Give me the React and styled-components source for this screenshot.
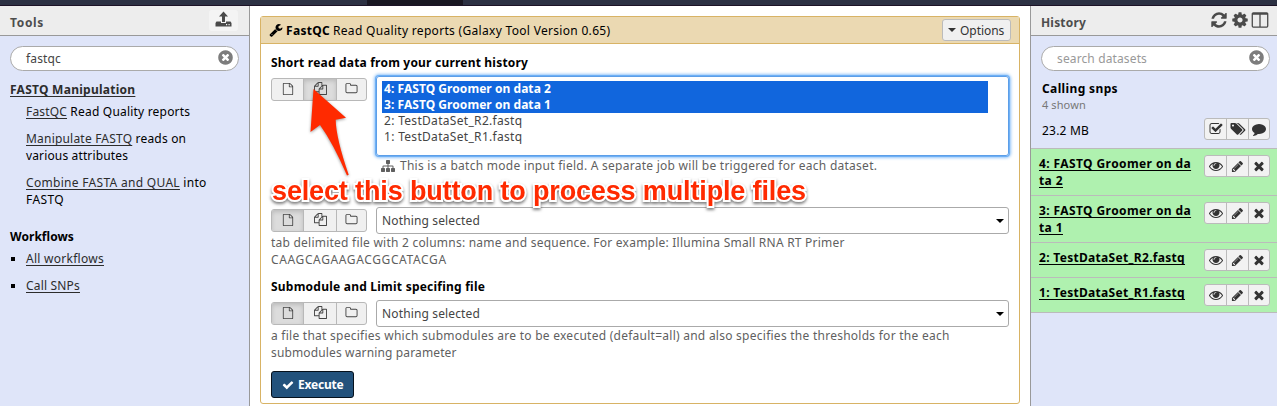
import React from 'react';
import styled, { createGlobalStyle, css } from 'styled-components';

const GlobalStyle = createGlobalStyle`
  * { box-sizing: border-box; }
  body { margin: 0; overflow: hidden; background: #fff; }
`;

const ICONS = {
  file: 'M1596 380q28 28 48 76t20 88v1152q0 40-28 68t-68 28h-1344q-40 0-68-28t-28-68v-1600q0-40 28-68t68-28h896q40 0 88 20t76 48zm-444-244v376h376q-10-29-22-41l-313-313q-12-12-41-22zm384 1528v-1024h-416q-40 0-68-28t-28-68v-416h-768v1536h1280z',
  files: 'M1696 384q40 0 68 28t28 68v1216q0 40-28 68t-68 28h-960q-40 0-68-28t-28-68v-288h-544q-40 0-68-28t-28-68v-672q0-40 20-88t48-76l408-408q28-28 76-48t88-20h416q40 0 68 28t28 68v328q68-40 128-40h416zm-544 213l-299 299h299v-299zm-640-384l-299 299h299v-299zm196 647l316-316v-416h-384v416q0 40-28 68t-68 28h-416v640h512v-256q0-40 20-88t48-76zm956 804v-1152h-384v416q0 40-28 68t-68 28h-416v640h896z',
  folder: 'M1600 1312v-704q0-40-28-68t-68-28h-704q-40 0-68-28t-28-68v-64q0-40-28-68t-68-28h-320q-40 0-68 28t-28 68v960q0 40 28 68t68 28h1216q40 0 68-28t28-68zm128-704v704q0 92-66 158t-158 66h-1216q-92 0-158-66t-66-158v-960q0-92 66-158t158-66h320q92 0 158 66t66 158v32h672q92 0 158 66t66 158z',
  times: 'M1490 1322q0 40-28 68l-136 136q-28 28-68 28t-68-28l-294-294-294 294q-28 28-68 28t-68-28l-136-136q-28-28-28-68t28-68l294-294-294-294q-28-28-28-68t28-68l136-136q28-28 68-28t68 28l294 294 294-294q28-28 68-28t68 28l136 136q28 28 28 68t-28 68l-294 294 294 294q28 28 28 68z',
  timesCircle: 'M1277 1122q0-26-19-45l-181-181 181-181q19-19 19-45 0-27-19-46l-90-90q-19-19-46-19-26 0-45 19l-181 181-181-181q-19-19-45-19-27 0-46 19l-90 90q-19 19-19 46 0 26 19 45l181 181-181 181q-19 19-19 45 0 27 19 46l90 90q19 19 46 19 26 0 45-19l181-181 181 181q19 19 45 19 27 0 46-19l90-90q19-19 19-46zm387-226q0 209-103 385.5t-279.5 279.5-385.5 103-385.5-103-279.5-279.5-103-385.5 103-385.5 279.5-279.5 385.5-103 385.5 103 279.5 279.5 103 385.5z',
  check: 'M1671 566q0 40-28 68l-724 724-136 136q-28 28-68 28t-68-28l-136-136-362-362q-28-28-28-68t28-68l136-136q28-28 68-28t68 28l294 295 656-657q28-28 68-28t68 28l136 136q28 28 28 68z',
  eye: 'M1664 960q-152-236-381-353 61 104 61 225 0 185-131.5 316.5t-316.5 131.5-316.5-131.5-131.5-316.5q0-121 61-225-229 117-381 353 133 205 333.5 326.5t434.5 121.5 434.5-121.5 333.5-326.5zm-720-384q0-20-14-34t-34-14q-125 0-214.5 89.5t-89.5 214.5q0 20 14 34t34 14 34-14 14-34q0-86 61-147t147-61q20 0 34-14t14-34zm848 384q0 34-20 69-140 230-376.5 368.5t-499.5 138.5-499.5-139-376.5-368q-20-35-20-69t20-69q140-229 376.5-368t499.5-139 499.5 139 376.5 368q20 35 20 69z',
  pencil: 'M491 1536l91-91-235-235-91 91v107h128v128h107zm523-928q0-22-22-22-10 0-17 7l-542 542q-7 7-7 17 0 22 22 22 10 0 17-7l542-542q7-7 7-17zm-54-192l416 416-832 832h-416v-416zm683 96q0 53-37 90l-166 166-416-416 166-165q36-38 90-38 53 0 91 38l235 234q37 39 37 91z',
  columns: 'M224 1536h608v-1152h-640v1120q0 13 9.5 22.5t22.5 9.5zm1376-32v-1120h-640v1152h608q13 0 22.5-9.5t9.5-22.5zm128-1216v1216q0 66-47 113t-113 47h-1344q-66 0-113-47t-47-113v-1216q0-66 47-113t113-47h1344q66 0 113 47t47 113z',
  refresh: 'M1639 1056q0 5-1 7-64 268-268 434.5t-478 166.5q-146 0-282.5-55t-243.5-157l-129 129q-19 19-45 19t-45-19-19-45v-448q0-26 19-45t45-19h448q26 0 45 19t19 45-19 45l-137 137q71 66 161 102t187 36q134 0 250-65t186-179q11-17 53-117 8-23 30-23h192q13 0 22.5 9.5t9.5 22.5zm25-800v448q0 26-19 45t-45 19h-448q-26 0-45-19t-19-45 19-45l138-138q-148-137-349-137-134 0-250 65t-186 179q-11 17-53 117-8 23-30 23h-199q-13 0-22.5-9.5t-9.5-22.5v-7q65-268 270-434.5t480-166.5q146 0 284 55.5t245 156.5l130-129q19-19 45-19t45 19 19 45z',
  cog: 'M1152 896q0-106-75-181t-181-75-181 75-75 181 75 181 181 75 181-75 75-181zm512-109v222q0 12-8 23t-20 13l-185 28q-19 54-39 91 35 50 107 138 10 12 10 25t-9 23q-27 37-99 108t-94 71q-12 0-26-9l-138-108q-44 23-91 38-16 136-29 186-7 28-36 28h-222q-14 0-24.5-8.5t-11.5-21.5l-28-184q-49-16-90-37l-141 107q-10 9-25 9-14 0-25-11-126-114-165-168-7-10-7-23 0-12 8-23 15-21 51-66.5t54-70.5q-27-50-41-99l-183-27q-13-2-21-12.5t-8-23.5v-222q0-12 8-23t19-13l186-28q14-46 39-92-40-57-107-138-10-12-10-24 0-10 9-23 26-36 98.5-107.5t94.5-71.5q13 0 26 10l138 107q44-23 91-38 16-136 29-186 7-28 36-28h222q14 0 24.5 8.5t11.5 21.5l28 184q49 16 90 37l142-107q9-9 24-9 13 0 25 10 129 119 165 170 7 8 7 22 0 12-8 23-15 21-51 66.5t-54 70.5q26 50 41 98l183 28q13 2 21 12.5t8 23.5z',
  sitemap: 'M1792 1248v320q0 40-28 68t-68 28h-320q-40 0-68-28t-28-68v-320q0-40 28-68t68-28h96v-192h-512v192h96q40 0 68 28t28 68v320q0 40-28 68t-68 28h-320q-40 0-68-28t-28-68v-320q0-40 28-68t68-28h96v-192h-512v192h96q40 0 68 28t28 68v320q0 40-28 68t-68 28h-320q-40 0-68-28t-28-68v-320q0-40 28-68t68-28h96v-192q0-52 38-90t90-38h512v-192h-96q-40 0-68-28t-28-68v-320q0-40 28-68t68-28h320q40 0 68 28t28 68v320q0 40-28 68t-68 28h-96v192h512q52 0 90 38t38 90v192h96q40 0 68 28t28 68z',
  comment: 'M1792 896q0 174-120 321.5t-326 233-450 85.5q-70 0-145-8-198 175-460 242-49 14-114 22-17 2-30.5-9t-17.5-29v-1q-3-4-.5-12t2-10 4.5-9.5l6-9 7-8.5 8-9q7-8 31-34.5t34.5-38 31-39.5 32.5-51 27-59 26-76q-157-89-247.5-220t-90.5-281q0-130 71-248.5t191-204.5 286-136.5 348-50.5q244 0 450 85.5t326 233 120 321.5z',
  tags: 'M384 448q0-53-37.5-90.5t-90.5-37.5-90.5 37.5-37.5 90.5 37.5 90.5 90.5 37.5 90.5-37.5 37.5-90.5zm1067 576q0 53-37 90l-491 492q-39 37-91 37-53 0-90-37l-715-716q-38-37-64.5-101t-26.5-117v-416q0-52 38-90t90-38h416q53 0 117 26.5t102 64.5l715 714q37 39 37 91zm384 0q0 53-37 90l-491 492q-39 37-91 37-36 0-59-14t-53-45l470-470q37-37 37-90 0-52-37-91l-715-714q-38-38-102-64.5t-117-26.5h224q53 0 117 26.5t102 64.5l715 714q37 39 37 91z',
  checkSquare: 'M1472 930v318q0 119-84.5 203.5t-203.5 84.5h-832q-119 0-203.5-84.5t-84.5-203.5v-832q0-119 84.5-203.5t203.5-84.5h832q63 0 117 25 15 7 18 23 3 17-9 29l-49 49q-10 10-23 10-3 0-9-2-23-6-45-6h-832q-66 0-113 47t-47 113v832q0 66 47 113t113 47h832q66 0 113-47t47-113v-254q0-13 9-22l64-64q10-10 23-10 6 0 12 3 20 8 20 29zm231-489l-814 814q-24 24-57 24t-57-24l-430-430q-24-24-24-57t24-57l110-110q24-24 57-24t57 24l263 263 647-647q24-24 57-24t57 24l110 110q24 24 24 57t-24 57z',
  wrench: 'M448 1472q0-26-19-45t-45-19-45 19-19 45 19 45 45 19 45-19 19-45zm644-420l-682 682q-37 37-90 37-52 0-91-37l-106-108q-38-36-38-90 0-53 38-91l681-681q39 98 114.5 173.5t173.5 114.5zm634-435q0 39-23 106-47 134-164.5 217.5t-258.5 83.5q-185 0-316.5-131.5t-131.5-316.5 131.5-316.5 316.5-131.5q58 0 121.5 16.5t107.5 46.5q16 11 16 28t-16 28l-293 169v224l193 107q5-3 79-48.5t135.5-81 70.5-35.5q15 0 23.5 10t8.5 25z',
};

const Svg = styled.svg`
  display: block;
  flex: none;
  overflow: visible;
  fill: ${(p) => p.$color || 'currentColor'};
`;
const Icon = ({ name, size = 13, color }) => (
  <Svg viewBox="0 0 1792 1792" width={size} height={size} $color={color}>
    <path d={ICONS[name]} />
  </Svg>
);

const Page = styled.div`
  position: relative;
  height: 406px;
  display: flex;
  flex-direction: column;
  font: 12px/17px 'Noto Sans', 'Open Sans', sans-serif;
  letter-spacing: 0.2px;
  color: #000;
`;
const Masthead = styled.div`
  height: 6px;
  flex: none;
  padding-left: 367px;
  background: #2c3143;
  border-bottom: 1px solid #1c1226;
`;
const MastheadTab = styled.div`
  width: 96px;
  height: 5px;
  background: #191722;
`;
const Columns = styled.div`
  flex: 1;
  display: flex;
  min-height: 0;
`;
const Side = styled.aside`
  flex: none;
  width: ${(p) => p.$width}px;
  background: #dfe5f9;
  ${(p) => p.$side}: 1px solid #999;
`;
const SideHeader = styled.div`
  height: 30px;
  display: flex;
  align-items: center;
  justify-content: space-between;
  padding: 0 ${(p) => p.$right}px 0 10px;
  background: #ededed;
  border-bottom: 1px solid #999;
  color: #4d4d4d;
`;
const SideTitle = styled.div`
  font-weight: bold;
  padding-top: 4px;
`;
const HeaderIcons = styled.div`
  display: flex;
  align-items: center;
  gap: 2.5px;
  margin-top: -2px;
  color: #4a4a4a;
`;
const UploadButton = styled.div`
  width: 29px;
  height: 21px;
  margin-top: -1px;
  background: #f4f4f4;
  border-radius: 3px;
  display: flex;
  justify-content: center;
  align-items: flex-start;
  padding-top: 1px;
`;
const Search = styled.div`
  width: 229px;
  height: 25px;
  margin: 10px 0 0 10px;
  padding: 0 4px 0 15px;
  display: flex;
  align-items: center;
  justify-content: space-between;
  background: #fff;
  border: 1px solid #aaa;
  border-radius: 13px;
  color: ${(p) => (p.$placeholder ? '#999' : '#444')};
`;
const SearchClear = styled.div`
  margin-top: -3px;
`;

const T = styled.span`
  font-weight: ${(p) => (p.$bold ? 'bold' : 'inherit')};
  letter-spacing: ${(p) => p.$ls}px;
  white-space: pre;
`;
const Link = styled(T)`
  color: ${(p) => p.$color || '#2c2c2c'};
  text-decoration: underline;
  text-decoration-skip-ink: none;
  text-underline-offset: 2px;
  text-decoration-thickness: 1px;
`;
const ToolMenu = styled.div`
  padding: 10px 10px 0;
`;
const ToolEntry = styled.div`
  padding-left: 16px;
  margin: ${(p) => (p.$first ? 5 : 10)}px 0 0;
`;
const WorkflowTitle = styled.div`
  margin-top: 20px;
`;
const WorkflowEntry = styled.div`
  display: flex;
  align-items: center;
  margin-top: ${(p) => (p.$first ? 5 : 10)}px;
`;
const Bullet = styled.i`
  width: 4px;
  height: 4px;
  margin: 1px 11px 0 1px;
  background: #000;
`;

const Center = styled.main`
  flex: 1;
  min-width: 0;
  padding: 10px;
`;
const Card = styled.section`
  border: 1px solid #d8b365;
  border-radius: 3px;
`;
const CardHeader = styled.header`
  height: 27px;
  display: flex;
  align-items: center;
  padding: 0 8px;
  background: #ebd9b2;
  border-bottom: 1px solid #d8b365;
`;
const CardTitle = styled.h1`
  flex: 1;
  display: flex;
  gap: 3px;
  margin: 0 0 0 3px;
  font: inherit;
`;
const OptionsButton = styled.button`
  width: 69px;
  height: 22px;
  display: flex;
  align-items: center;
  gap: 4px;
  padding: 0 0 0 5px;
  border: 1px solid #bbb;
  border-radius: 3px;
  background: #f0f0f0;
  color: #333;
  font: inherit;
`;
const Caret = styled.i`
  border: ${(p) => p.$size}px solid transparent;
  border-top-color: currentColor;
  border-bottom: 0;
`;
const Form = styled.div`
  padding: 10px 10px 5px;
`;
const Field = styled.div`
  margin-bottom: ${(p) => p.$gap}px;
`;
const Label = styled.div`
  margin-bottom: 5px;
`;
const FieldRow = styled.div`
  display: flex;
  align-items: flex-start;
  gap: 9px;
`;
const Modes = styled.div`
  display: grid;
  grid-template-columns: 31px 33px 30px;
  width: 96px;
  height: 23px;
  margin-top: 2px;
  border: 1px solid #b8b8b8;
  border-radius: 3px;
  overflow: hidden;
  background: #f0f0f0;
`;
const Mode = styled.div`
  display: flex;
  align-items: center;
  justify-content: center;
  padding-bottom: 2px;
  color: #444;
  & + & { border-left: 1px solid #b8b8b8; }
  ${(p) => p.$on && css`
    background: #dcdcdc;
    box-shadow: inset 0 2px 4px rgba(0, 0, 0, 0.15);
  `}
`;
const Control = styled.div`
  flex: 1;
`;
const MultiSelect = styled.div`
  height: 80px;
  padding: 4px 20px 0 5px;
  border: 1px solid #5c9ee8;
  border-radius: 3px;
  box-shadow: 0 0 0 1px #6eb0f5, 0 0 3px 2px rgba(110, 176, 245, 0.75);
`;
const Choice = styled.div`
  height: 16px;
  line-height: 16px;
  padding-left: 2px;
  background: ${(p) => (p.$on ? '#1166dd' : 'transparent')};
  color: ${(p) => (p.$on ? '#fff' : '#444')};
`;
const Batch = styled.div`
  display: flex;
  align-items: center;
  gap: 5px;
  margin: 1px 0 0 5px;
  color: #5f5f5f;
`;
const Select = styled.div`
  height: 27px;
  display: flex;
  align-items: center;
  justify-content: space-between;
  padding: 0 4px 0 5px;
  border: 1px solid #aaa;
  border-radius: 3px;
  color: #444;
`;
const SelectArrow = styled.span`
  color: #000;
  display: flex;
`;
const Help = styled.div`
  color: #5f5f5f;
`;
const Execute = styled.button`
  width: 83px;
  height: 27px;
  display: flex;
  align-items: center;
  gap: 4px;
  padding: 0 0 0 10px;
  border: 1px solid #06111c;
  border-radius: 3px;
  background: #23527c;
  color: #fff;
  font: inherit;
`;

const HistoryInfo = styled.div`
  padding: 9px 6px 0 11px;
  height: 77px;
`;
const Shown = styled.div`
  margin-top: -1px;
  font-size: 11px;
  color: #777;
`;
const SizeRow = styled.div`
  display: flex;
  justify-content: space-between;
  align-items: flex-start;
  padding: 5px 1px 0 0;
`;
const SizeText = styled.div`
  padding-top: 4px;
`;
const Actions = styled.div`
  flex: none;
  width: 66px;
  height: 22px;
  display: grid;
  grid-template-columns: 21px 22px 21px;
  border: 1px solid #bbb;
  border-radius: 3px;
  background: #f2f2f2;
  color: #333;
`;
const Action = styled.div`
  display: flex;
  align-items: center;
  justify-content: center;
  & + & { border-left: 1px solid #bbb; }
`;
const Datasets = styled.div`
  border-bottom: 1px solid #bbb;
`;
const Dataset = styled.div`
  display: flex;
  justify-content: space-between;
  padding: 6px 7px 6px 8px;
  border-top: 1px solid #bbb;
  background: #aff1af;
`;

const Annotation = styled.div`
  position: absolute;
  left: 272px;
  top: 175px;
  font: bold 27px/32px 'Liberation Sans', Arial, sans-serif;
  letter-spacing: -0.14px;
  white-space: nowrap;
  color: #ff2a00;
  -webkit-text-stroke: 4px #fff;
  paint-order: stroke fill;
  stroke-linejoin: round;
  filter: drop-shadow(0 2px 1.5px rgba(0, 0, 0, 0.5));
`;
const Arrow = styled.svg`
  position: absolute;
  left: 300px;
  top: 80px;
  filter: drop-shadow(0 1px 1.5px rgba(0, 0, 0, 0.4));
`;

const ModeButtons = ({ active }) => (
  <Modes>
    {['file', 'files', 'folder'].map((n, i) => (
      <Mode key={n} $on={i === active}><Icon name={n} size={n === 'file' ? 12 : 13} /></Mode>
    ))}
  </Modes>
);
const ActionGroup = ({ icons }) => (
  <Actions>
    {icons.map((n) => <Action key={n}><Icon name={n} size={n === 'pencil' ? 13 : 14} /></Action>)}
  </Actions>
);
const EmptySelect = () => (
  <Control>
    <Select><T $ls={0.14}>Nothing selected</T><SelectArrow><Caret $size={4} /></SelectArrow></Select>
  </Control>
);

const datasets = [
  { lines: ['4: FASTQ Groomer on da', 'ta 2'], ls: 0.4 },
  { lines: ['3: FASTQ Groomer on da', 'ta 1'], ls: 0.4 },
  { lines: ['2: TestDataSet_R2.fastq'], ls: 0.31 },
  { lines: ['1: TestDataSet_R1.fastq'], ls: 0.31 },
];

export default function App() {
  return (
    <Page>
      <GlobalStyle />
      <Masthead><MastheadTab /></Masthead>
      <Columns>
        <Side $width={250} $side="border-right">
          <SideHeader $right={11}>
            <SideTitle><T $ls={0.66}>Tools</T></SideTitle>
            <UploadButton>
              <Svg width="17" height="17" viewBox="0 0 17 17" $color="#4a4a4a">
                <path d="M8.5 0.5L13 5.5H10V11H7V5.5H4Z" />
                <path fillRule="evenodd" d="M1.5 10.5H6V12H11V10.5H15.5L16.5 12V15.5H0.5V12ZM11 13V14.2H12.2V13ZM13.5 13V14.2H14.7V13Z" />
              </Svg>
            </UploadButton>
          </SideHeader>
          <Search><T $ls={0.15}>fastqc</T><SearchClear><Icon name="timesCircle" size={17} color="#7d7d7d" /></SearchClear></Search>
          <ToolMenu>
            <div><Link $bold $ls={0.26}>FASTQ Manipulation</Link></div>
            <ToolEntry $first><Link $ls={0.17}>FastQC</Link><T $ls={0.2}> Read Quality reports</T></ToolEntry>
            <ToolEntry>
              <Link $ls={0.2}>Manipulate FASTQ</Link><T $ls={0.19}> reads on</T><br />
              <T $ls={0.14}>various attributes</T>
            </ToolEntry>
            <ToolEntry>
              <Link $ls={0.3}>Combine FASTA and QUAL</Link><T $ls={0.3}> into</T><br />
              <T $ls={0.4}>FASTQ</T>
            </ToolEntry>
            <WorkflowTitle><T $bold $ls={0.05}>Workflows</T></WorkflowTitle>
            <WorkflowEntry $first><Bullet /><Link $ls={0.27}>All workflows</Link></WorkflowEntry>
            <WorkflowEntry><Bullet /><Link $ls={0.18}>Call SNPs</Link></WorkflowEntry>
          </ToolMenu>
        </Side>

        <Center>
          <Card>
            <CardHeader>
              <Icon name="wrench" size={14} />
              <CardTitle>
                <T $bold $ls={0.3}>FastQC</T>
                <T $ls={0.31}>Read Quality reports (Galaxy Tool Version 0.65)</T>
              </CardTitle>
              <OptionsButton><Caret $size={4.5} /><T $ls={-0.05}>Options</T></OptionsButton>
            </CardHeader>
            <Form>
              <Field $gap={33}>
                <Label><T $bold $ls={0.2}>Short read data from your current history</T></Label>
                <FieldRow>
                  <ModeButtons active={1} />
                  <Control>
                    <MultiSelect>
                      <Choice $on><T $bold $ls={0.05}>4: FASTQ Groomer on data 2</T></Choice>
                      <Choice $on><T $bold $ls={0.05}>3: FASTQ Groomer on data 1</T></Choice>
                      <Choice><T $ls={0.31}>2: TestDataSet_R2.fastq</T></Choice>
                      <Choice><T $ls={0.31}>1: TestDataSet_R1.fastq</T></Choice>
                    </MultiSelect>
                    <Batch>
                      <Icon name="sitemap" size={14} />
                      <T $ls={0.26}>This is a batch mode input field. A separate job will be triggered for each dataset.</T>
                    </Batch>
                  </Control>
                </FieldRow>
              </Field>
              <Field $gap={10}>
                <FieldRow><ModeButtons active={0} /><EmptySelect /></FieldRow>
                <Help>
                  <T $ls={0.23}>tab delimited file with 2 columns: name and sequence. For example: Illumina Small RNA RT Primer</T><br />
                  <T $ls={0.62}>CAAGCAGAAGACGGCATACGA</T>
                </Help>
              </Field>
              <Field $gap={10}>
                <Label><T $bold $ls={0.23}>Submodule and Limit specifing file</T></Label>
                <FieldRow><ModeButtons active={0} /><EmptySelect /></FieldRow>
                <Help>
                  <T $ls={0.255}>a file that specifies which submodules are to be executed (default=all) and also specifies the thresholds for the each</T><br />
                  <T $ls={0.14}>submodules warning parameter</T>
                </Help>
              </Field>
              <Execute><Icon name="check" size={12} /><T $bold $ls={-0.22}>Execute</T></Execute>
            </Form>
          </Card>
        </Center>

        <Side $width={247} $side="border-left">
          <SideHeader $right={8}>
            <SideTitle><T $ls={0.18}>History</T></SideTitle>
            <HeaderIcons>
              <Icon name="refresh" size={18} />
              <Icon name="cog" size={18} />
              <Icon name="columns" size={18} />
            </HeaderIcons>
          </SideHeader>
          <Search $placeholder><T $ls={0.13}>search datasets</T><SearchClear><Icon name="timesCircle" size={17} color="#7d7d7d" /></SearchClear></Search>
          <HistoryInfo>
            <div><T $bold $ls={0.37}>Calling snps</T></div>
            <Shown><T $ls={0.1}>4 shown</T></Shown>
            <SizeRow>
              <SizeText><T $ls={0.2}>23.2 MB</T></SizeText>
              <ActionGroup icons={['checkSquare', 'tags', 'comment']} />
            </SizeRow>
          </HistoryInfo>
          <Datasets>
            {datasets.map((d) => (
              <Dataset key={d.lines[0]}>
                <div>
                  {d.lines.map((l) => <div key={l}><Link $bold $color="#000" $ls={d.ls}>{l}</Link></div>)}
                </div>
                <ActionGroup icons={['eye', 'pencil', 'times']} />
              </Dataset>
            ))}
          </Datasets>
        </Side>
      </Columns>

      <Arrow width="60" height="100" viewBox="300 80 60 100">
        <path fill="#ff2a00" d="M313.5 89L346 117.7L335.7 119.7Q336 138 348.7 174.8L347 175.5Q333 143 320 125L310.5 132Z" />
      </Arrow>
      <Annotation>select this button to process multiple files</Annotation>
    </Page>
  );
}
